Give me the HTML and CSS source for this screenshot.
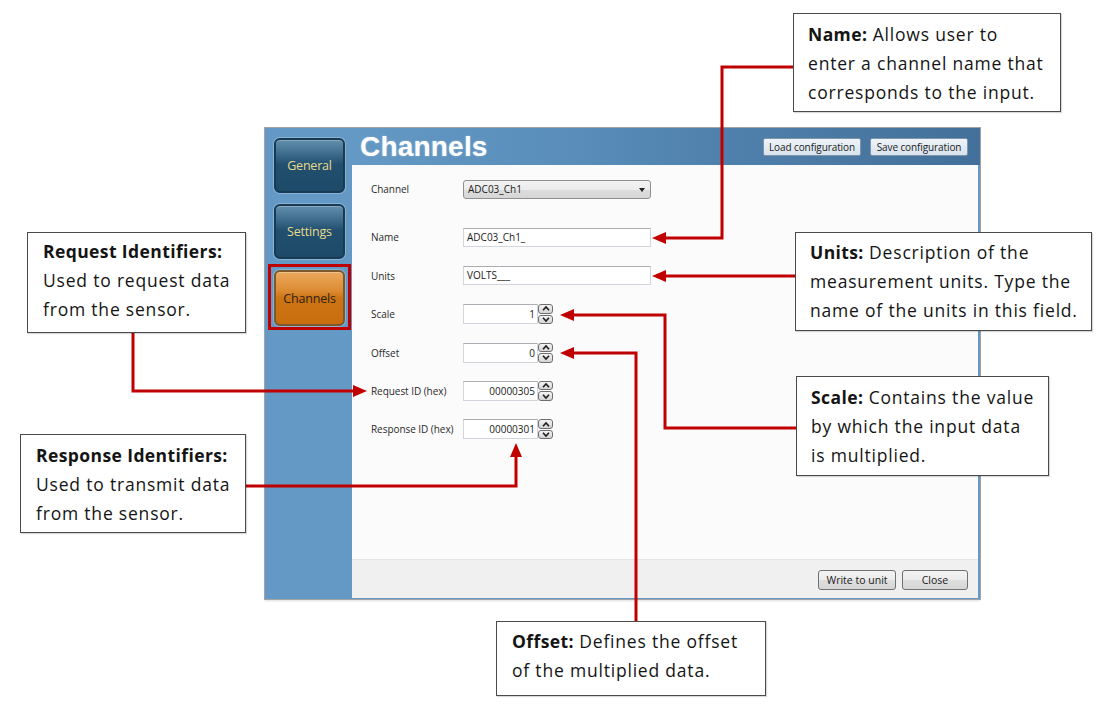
FILE: index.html
```html
<!DOCTYPE html>
<html>
<head>
<meta charset="utf-8">
<title>Channels</title>
<link rel="stylesheet" href="styles.css">
</head>
<body>
<div class="canvas">
  <div class="app">
    <aside class="sidebar">
      <div class="nav-btn nav-blue">General</div>
      <div class="nav-btn nav-blue">Settings</div>
      <div class="nav-selected">
        <div class="nav-btn nav-orange">Channels</div>
      </div>
    </aside>
    <header class="topbar">
      <h1 class="title">Channels</h1>
      <div class="top-actions">
        <button class="btn btn-top">Load configuration</button>
        <button class="btn btn-top">Save configuration</button>
      </div>
    </header>
    <main class="panel">
      <div class="form">
        <div class="row row-channel">
          <span class="lbl">Channel</span>
          <div class="select">ADC03_Ch1<span class="caret"></span></div>
        </div>
        <div class="row">
          <span class="lbl">Name</span>
          <div class="text-input">ADC03_Ch1_</div>
        </div>
        <div class="row">
          <span class="lbl">Units</span>
          <div class="text-input">VOLTS___</div>
        </div>
        <div class="row">
          <span class="lbl">Scale</span>
          <div class="num-input">1</div>
          <div class="spin"><span class="spin-btn"><svg viewBox="0 0 10 7"><path d="M2 5.2 L5 2 L8 5.2"/></svg></span><span class="spin-btn"><svg viewBox="0 0 10 7"><path d="M2 1.8 L5 5 L8 1.8"/></svg></span></div>
        </div>
        <div class="row">
          <span class="lbl">Offset</span>
          <div class="num-input">0</div>
          <div class="spin"><span class="spin-btn"><svg viewBox="0 0 10 7"><path d="M2 5.2 L5 2 L8 5.2"/></svg></span><span class="spin-btn"><svg viewBox="0 0 10 7"><path d="M2 1.8 L5 5 L8 1.8"/></svg></span></div>
        </div>
        <div class="row">
          <span class="lbl">Request ID (hex)</span>
          <div class="num-input">00000305</div>
          <div class="spin"><span class="spin-btn"><svg viewBox="0 0 10 7"><path d="M2 5.2 L5 2 L8 5.2"/></svg></span><span class="spin-btn"><svg viewBox="0 0 10 7"><path d="M2 1.8 L5 5 L8 1.8"/></svg></span></div>
        </div>
        <div class="row">
          <span class="lbl">Response ID (hex)</span>
          <div class="num-input">00000301</div>
          <div class="spin"><span class="spin-btn"><svg viewBox="0 0 10 7"><path d="M2 5.2 L5 2 L8 5.2"/></svg></span><span class="spin-btn"><svg viewBox="0 0 10 7"><path d="M2 1.8 L5 5 L8 1.8"/></svg></span></div>
        </div>
      </div>
      <footer class="footer">
        <button class="btn btn-foot btn-write">Write to unit</button>
        <button class="btn btn-foot btn-close">Close</button>
      </footer>
    </main>
  </div>

  <svg class="connectors" viewBox="0 0 1100 709" width="1100" height="709">
    <g class="lines">
      <path d="M794 67 H722 V238 H662"/>
      <path d="M796 276 H662"/>
      <path d="M570 315 H665 V428 H797"/>
      <path d="M570 353 H636 V622"/>
      <path d="M133 333 V391 H357"/>
      <path d="M245 486 H516 V453"/>
    </g>
    <g class="heads">
      <polygon points="652,238 666,232 666,244"/>
      <polygon points="652,276 666,270 666,282"/>
      <polygon points="560,315 574,309 574,321"/>
      <polygon points="560,353 574,347 574,359"/>
      <polygon points="367,391 353,385 353,397"/>
      <polygon points="516,443 510,457 522,457"/>
    </g>
  </svg>

  <div class="callout c-name"><b>Name:</b> Allows user to<br>enter a channel name that<br>corresponds to the input.</div>
  <div class="callout c-request"><b>Request Identifiers:</b><br>Used to request data<br>from the sensor.</div>
  <div class="callout c-units"><b>Units:</b> Description of the<br>measurement units. Type the<br>name of the units in this field.</div>
  <div class="callout c-scale"><b>Scale:</b> Contains the value<br>by which the input data<br>is multiplied.</div>
  <div class="callout c-response"><b>Response Identifiers:</b><br>Used to transmit data<br>from the sensor.</div>
  <div class="callout c-offset"><b>Offset:</b> Defines the offset<br>of the multiplied data.</div>
</div>
</body>
</html>
```

FILE: styles.css
```css
html, body {
  margin: 0;
  padding: 0;
  background: #ffffff;
}

.canvas {
  position: relative;
  width: 1100px;
  height: 709px;
  overflow: hidden;
  background: #ffffff;
  font-family: "Open Sans", "Noto Sans", sans-serif;
}

/* ---------- application window ---------- */
.app {
  position: absolute;
  left: 264px;
  top: 127px;
  width: 717px;
  height: 473px;
  box-sizing: border-box;
  border: 1px solid #a3a3a3;
  background: #6399c4;
  display: grid;
  grid-template-columns: 87px 1fr;
  grid-template-rows: 37px 1fr;
  box-shadow: 0 2px 2px -1px rgba(150, 150, 150, 0.3);
}

.sidebar {
  grid-row: 1 / 3;
  grid-column: 1;
  background: #6399c4;
  display: flex;
  flex-direction: column;
  align-items: flex-start;
  padding: 10px 0 0 9px;
  gap: 11px;
}

.nav-btn {
  width: 71px;
  height: 55px;
  box-sizing: border-box;
  border-radius: 6px;
  display: flex;
  align-items: center;
  justify-content: center;
  font-size: 12.5px;
  letter-spacing: -0.2px;
}

.nav-blue {
  color: #e6dc8e;
  border: 2px solid #183a52;
  background: linear-gradient(#628fae 0%, #3a6888 30%, #224f6e 48%, #1d4a69 100%);
  box-shadow: inset 0 1px 0 rgba(255, 255, 255, 0.25), 0 0 0 1px rgba(210, 230, 245, 0.35);
}

.nav-selected {
  margin: -6px 0 0 -6px;
  padding: 3px 3px 1px 3px;
  border: 3px solid #c00000;
}

.nav-orange {
  color: #2e2210;
  height: 56px;
  border: 2px solid #7c5a2e;
  background: linear-gradient(#eaa95c 0%, #dd8c34 35%, #cd7414 50%, #c86e0f 100%);
  box-shadow: inset 0 1px 0 rgba(255, 255, 255, 0.3), 0 0 0 1px rgba(210, 230, 245, 0.35);
}

.topbar {
  grid-row: 1;
  grid-column: 2;
  display: flex;
  align-items: center;
  justify-content: space-between;
  padding: 0 12px 0 8px;
  background: linear-gradient(to right, #6399c4 0%, #5a8dba 35%, #4f80ab 60%, #42709a 100%);
}

.title {
  margin: 0;
  font-family: "Liberation Sans", Arial, sans-serif;
  font-weight: bold;
  font-size: 28px;
  line-height: 37px;
  color: #ffffff;
  text-shadow: 0 0 2px rgba(255, 255, 255, 0.4);
  letter-spacing: 0.2px;
}

.top-actions {
  display: flex;
  gap: 9px;
  align-self: flex-start;
  margin-top: 10px;
}

.btn {
  font-family: "Open Sans", "Noto Sans", sans-serif;
  font-size: 10px;
  color: #1b1b1b;
  padding: 0;
  margin: 0;
  box-sizing: border-box;
  cursor: default;
}

.btn-top {
  width: 98px;
  height: 18px;
  border: 1px solid #7f95a8;
  border-radius: 2px;
  background: linear-gradient(#eef3f8, #d8e3ed);
  letter-spacing: -0.1px;
}

.panel {
  grid-row: 2;
  grid-column: 2;
  margin: 0 2px 1px 0;
  background: #fbfbfb;
  display: flex;
  flex-direction: column;
}

.form {
  flex: 1;
  display: flex;
  flex-direction: column;
  gap: 18.4px;
  padding: 14px 0 0 19px;
}

.row {
  display: flex;
  align-items: center;
  height: 20px;
}

.row-channel {
  margin-bottom: 10px;
}

.lbl {
  width: 92px;
  flex: none;
  font-size: 10px;
  color: #2a2a2a;
  letter-spacing: -0.05px;
}

.select {
  position: relative;
  width: 188px;
  height: 19px;
  box-sizing: border-box;
  border: 1px solid #8e8f8f;
  border-radius: 3px;
  background: linear-gradient(#f3f3f3 0%, #ebebeb 50%, #dddddd 51%, #d6d6d6 100%);
  font-size: 10px;
  line-height: 17px;
  padding-left: 4px;
  color: #1a1a1a;
}

.caret {
  position: absolute;
  right: 5px;
  top: 7px;
  width: 0;
  height: 0;
  border-left: 3.5px solid transparent;
  border-right: 3.5px solid transparent;
  border-top: 4px solid #222222;
}

.text-input {
  width: 188px;
  height: 19px;
  box-sizing: border-box;
  border: 1px solid #d2d6dc;
  border-top-color: #abadb3;
  background: #ffffff;
  font-size: 10px;
  line-height: 17px;
  padding-left: 3px;
  color: #1a1a1a;
}

.num-input {
  width: 75px;
  height: 20px;
  box-sizing: border-box;
  border: 1px solid #d2d6dc;
  border-top-color: #abadb3;
  background: #ffffff;
  font-size: 10px;
  line-height: 18px;
  text-align: right;
  padding-right: 2px;
  color: #1a1a1a;
}

.spin {
  width: 15px;
  height: 20px;
  display: flex;
  flex-direction: column;
  gap: 1px;
}

.spin-btn {
  flex: 1;
  box-sizing: border-box;
  border: 1px solid #6e6e6e;
  border-radius: 3px;
  background: linear-gradient(#f4f4f4, #d4d4d4);
  display: flex;
  align-items: center;
  justify-content: center;
}

.spin-btn svg {
  width: 10px;
  height: 7px;
  fill: none;
  stroke: #1e1e1e;
  stroke-width: 1.6;
}

.footer {
  height: 39px;
  box-sizing: border-box;
  background: #f0f0f0;
  border-top: 1px solid #e6e6e6;
  display: flex;
  justify-content: flex-end;
  align-items: center;
  gap: 6px;
  padding: 1px 10px 0 0;
}

.btn-foot {
  height: 20px;
  border: 1px solid #707070;
  border-radius: 3px;
  background: linear-gradient(#f3f3f3 0%, #ececec 50%, #dedede 51%, #d6d6d6 100%);
  font-size: 10.5px;
}

.btn-write { width: 78px; }
.btn-close { width: 66px; }

/* ---------- annotation overlay ---------- */
.connectors {
  position: absolute;
  left: 0;
  top: 0;
  pointer-events: none;
}

.connectors .lines path {
  fill: none;
  stroke: #c00000;
  stroke-width: 3;
  stroke-linejoin: miter;
}

.connectors .heads polygon {
  fill: #c00000;
}

.callout {
  position: absolute;
  box-sizing: border-box;
  background: #ffffff;
  border: 1px solid #4a4a4a;
  box-shadow: 1px 1px 1px rgba(0, 0, 0, 0.15);
  font-family: "Open Sans", "Noto Sans", sans-serif;
  font-size: 17.5px;
  letter-spacing: 0.8px;
  line-height: 29px;
  color: #141414;
  padding: 6px 0 0 14px;
  white-space: nowrap;
}

.callout b {
  font-weight: bold;
  letter-spacing: 0.4px;
}

.c-name { left: 793px; top: 13px; width: 268px; height: 99px; }
.c-request { left: 27px; top: 232px; width: 219px; height: 101px; padding-left: 15px; padding-top: 4px; }
.c-units { left: 795px; top: 232px; width: 297px; height: 99px; padding-top: 5px; }
.c-scale { left: 796px; top: 376px; width: 253px; height: 100px; }
.c-response { left: 20px; top: 434px; width: 226px; height: 99px; padding-left: 15px; }
.c-offset { left: 496px; top: 621px; width: 270px; height: 75px; padding-left: 15px; padding-top: 5px; }
```
